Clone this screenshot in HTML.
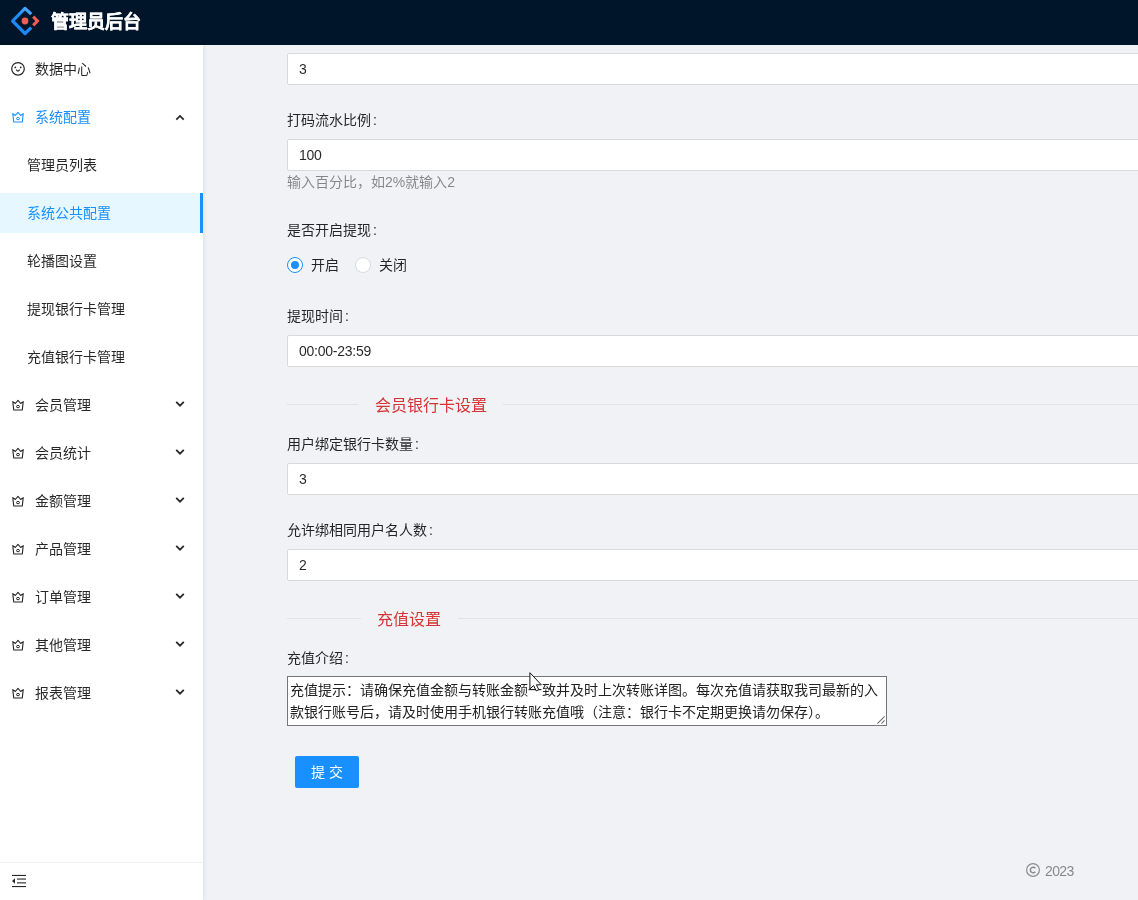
<!DOCTYPE html>
<html lang="zh-CN"><head><meta charset="utf-8">
<style>
*{box-sizing:border-box;margin:0;padding:0}
html,body{width:1138px;height:900px;overflow:hidden;background:#f0f2f5;font-family:"Liberation Sans",sans-serif;font-size:14px;color:rgba(0,0,0,.85)}
#hdr{position:absolute;left:0;top:0;width:1138px;height:45px;background:#001529}
#hdr .title{position:absolute;left:51px;top:10px;font-size:18px;line-height:24px;font-weight:bold;color:#fff;-webkit-text-stroke:0.35px #fff;letter-spacing:0}
#side{position:absolute;left:0;top:45px;width:203px;height:855px;background:#fff;box-shadow:1px 0 4px rgba(0,21,41,.08);z-index:2}
.mi{position:absolute;left:0;width:203px;height:40px;line-height:40px;white-space:nowrap}
.mi .t{position:absolute;left:35px;top:0}
.mi.sub .t{left:27px}
.mi.sel{background:#e6f7ff;color:#1890ff}
.mi.sel:after{content:"";position:absolute;right:0;top:0;width:3px;height:40px;background:#1890ff}
.mi.blue{color:#1890ff}
.ico{position:absolute;left:0;top:0}
#foot{position:absolute;left:0;top:817px;width:203px;height:38px;border-top:1px solid #f0f0f0}
#main{position:absolute;left:203px;top:45px;width:935px;height:855px;overflow:hidden}
.lab{position:absolute;left:84px;height:22px;line-height:22px;white-space:nowrap}
.inp{position:absolute;left:84px;width:1200px;height:32px;background:#fff;border:1px solid #d9d9d9;border-radius:2px;padding:0 11px;line-height:30px;color:rgba(0,0,0,.85);letter-spacing:-0.25px}
.help{position:absolute;left:84px;height:22px;line-height:22px;color:rgba(0,0,0,.45);white-space:nowrap}
.div{position:absolute;left:84px;width:1200px;height:26px}
.div .l1{position:absolute;left:0;top:13px;height:1px;background:rgba(0,0,0,.06)}
.div .l2{position:absolute;top:13px;height:1px;width:1000px;background:rgba(0,0,0,.06)}
.div .tx{position:absolute;top:1.5px;line-height:26px;font-size:16px;color:#d63434;white-space:nowrap}
.radio{position:absolute;width:16px;height:16px;border-radius:50%;border:1px solid #d9d9d9;background:#fff}
.radio.on{border-color:#1890ff}
.radio.on:after{content:"";position:absolute;left:3px;top:3px;width:8px;height:8px;border-radius:50%;background:#1890ff}
.ta{position:absolute;left:84px;top:631px;width:600px;height:50px;border:1px solid #767676;background:#fff;padding:2px 2px;line-height:22px;font-size:14px;color:#222;overflow:hidden;border-radius:0}
.btn{position:absolute;left:92px;top:711px;width:64px;height:32px;background:#1890ff;border-radius:2px;color:#fff;text-align:center;line-height:32px}
.copy{position:absolute;left:822px;top:814px;color:rgba(0,0,0,.45);line-height:22px;white-space:nowrap}
#hdr,#side,#main{will-change:transform}
</style></head><body>
<div id="hdr">
<svg width="45" height="45" style="position:absolute;left:0;top:0" viewBox="0 0 45 45">
<defs><linearGradient id="lg" x1="31" y1="12" x2="14" y2="30" gradientUnits="userSpaceOnUse"><stop offset="0" stop-color="#4aa8ff"/><stop offset="0.35" stop-color="#2290ff"/><stop offset="1" stop-color="#1a84f6"/></linearGradient></defs><path d="M31.2 14.2 L25 8.4 L12.6 21 L25 33.5 L31.2 27.6" fill="none" stroke="url(#lg)" stroke-width="3.2" stroke-linejoin="round" stroke-linecap="butt"/>
<path d="M33.2 16.6 L37.4 21 L33.2 25.4" fill="none" stroke="#f45c54" stroke-width="3.1" stroke-linejoin="miter"/>
<circle cx="25" cy="21" r="3.4" fill="#f45c54"/>
</svg>
<div class="title">管理员后台</div>
</div>
<div id="side">
<div class="mi " style="top:4px"><svg class="ico" width="203" height="40"><circle cx="18" cy="19.8" r="6.3" fill="none" stroke="#262626" stroke-width="1.25"/><circle cx="15.3" cy="18.4" r="0.85" fill="#262626"/><circle cx="20.7" cy="18.4" r="0.85" fill="#262626"/><path d="M16.3 20.6 Q17.95 23.6 19.6 20.6" fill="none" stroke="#262626" stroke-width="1.15"/></svg><span class="t">数据中心</span></div>
<div class="mi blue" style="top:52px"><svg class="ico" width="203" height="40"><path d="M12.8 16.6 L15.3 18.5 L18 15.4 L20.7 18.5 L23.2 16.6 L22.3 25 L13.7 25 Z" fill="none" stroke="#1890ff" stroke-width="1.1" stroke-linejoin="round"/><ellipse cx="18" cy="21.6" rx="1.5" ry="1.15" fill="none" stroke="#1890ff" stroke-width="1"/></svg><svg class="ico" width="203" height="40"><path d="M176.3 22.6 L180 18.9 L183.7 22.6" fill="none" stroke="#262626" stroke-width="1.7"/></svg><span class="t">系统配置</span></div>
<div class="mi sub" style="top:100px"><span class="t">管理员列表</span></div>
<div class="mi sub sel" style="top:148px"><span class="t">系统公共配置</span></div>
<div class="mi sub" style="top:196px"><span class="t">轮播图设置</span></div>
<div class="mi sub" style="top:244px"><span class="t">提现银行卡管理</span></div>
<div class="mi sub" style="top:292px"><span class="t">充值银行卡管理</span></div>
<div class="mi " style="top:340px"><svg class="ico" width="203" height="40"><path d="M12.8 16.6 L15.3 18.5 L18 15.4 L20.7 18.5 L23.2 16.6 L22.3 25 L13.7 25 Z" fill="none" stroke="#262626" stroke-width="1.1" stroke-linejoin="round"/><ellipse cx="18" cy="21.6" rx="1.5" ry="1.15" fill="none" stroke="#262626" stroke-width="1"/></svg><svg class="ico" width="203" height="40"><path d="M176.2 16.9 L180 20.7 L183.8 16.9" fill="none" stroke="#262626" stroke-width="1.7"/></svg><span class="t">会员管理</span></div>
<div class="mi " style="top:388px"><svg class="ico" width="203" height="40"><path d="M12.8 16.6 L15.3 18.5 L18 15.4 L20.7 18.5 L23.2 16.6 L22.3 25 L13.7 25 Z" fill="none" stroke="#262626" stroke-width="1.1" stroke-linejoin="round"/><ellipse cx="18" cy="21.6" rx="1.5" ry="1.15" fill="none" stroke="#262626" stroke-width="1"/></svg><svg class="ico" width="203" height="40"><path d="M176.2 16.9 L180 20.7 L183.8 16.9" fill="none" stroke="#262626" stroke-width="1.7"/></svg><span class="t">会员统计</span></div>
<div class="mi " style="top:436px"><svg class="ico" width="203" height="40"><path d="M12.8 16.6 L15.3 18.5 L18 15.4 L20.7 18.5 L23.2 16.6 L22.3 25 L13.7 25 Z" fill="none" stroke="#262626" stroke-width="1.1" stroke-linejoin="round"/><ellipse cx="18" cy="21.6" rx="1.5" ry="1.15" fill="none" stroke="#262626" stroke-width="1"/></svg><svg class="ico" width="203" height="40"><path d="M176.2 16.9 L180 20.7 L183.8 16.9" fill="none" stroke="#262626" stroke-width="1.7"/></svg><span class="t">金额管理</span></div>
<div class="mi " style="top:484px"><svg class="ico" width="203" height="40"><path d="M12.8 16.6 L15.3 18.5 L18 15.4 L20.7 18.5 L23.2 16.6 L22.3 25 L13.7 25 Z" fill="none" stroke="#262626" stroke-width="1.1" stroke-linejoin="round"/><ellipse cx="18" cy="21.6" rx="1.5" ry="1.15" fill="none" stroke="#262626" stroke-width="1"/></svg><svg class="ico" width="203" height="40"><path d="M176.2 16.9 L180 20.7 L183.8 16.9" fill="none" stroke="#262626" stroke-width="1.7"/></svg><span class="t">产品管理</span></div>
<div class="mi " style="top:532px"><svg class="ico" width="203" height="40"><path d="M12.8 16.6 L15.3 18.5 L18 15.4 L20.7 18.5 L23.2 16.6 L22.3 25 L13.7 25 Z" fill="none" stroke="#262626" stroke-width="1.1" stroke-linejoin="round"/><ellipse cx="18" cy="21.6" rx="1.5" ry="1.15" fill="none" stroke="#262626" stroke-width="1"/></svg><svg class="ico" width="203" height="40"><path d="M176.2 16.9 L180 20.7 L183.8 16.9" fill="none" stroke="#262626" stroke-width="1.7"/></svg><span class="t">订单管理</span></div>
<div class="mi " style="top:580px"><svg class="ico" width="203" height="40"><path d="M12.8 16.6 L15.3 18.5 L18 15.4 L20.7 18.5 L23.2 16.6 L22.3 25 L13.7 25 Z" fill="none" stroke="#262626" stroke-width="1.1" stroke-linejoin="round"/><ellipse cx="18" cy="21.6" rx="1.5" ry="1.15" fill="none" stroke="#262626" stroke-width="1"/></svg><svg class="ico" width="203" height="40"><path d="M176.2 16.9 L180 20.7 L183.8 16.9" fill="none" stroke="#262626" stroke-width="1.7"/></svg><span class="t">其他管理</span></div>
<div class="mi " style="top:628px"><svg class="ico" width="203" height="40"><path d="M12.8 16.6 L15.3 18.5 L18 15.4 L20.7 18.5 L23.2 16.6 L22.3 25 L13.7 25 Z" fill="none" stroke="#262626" stroke-width="1.1" stroke-linejoin="round"/><ellipse cx="18" cy="21.6" rx="1.5" ry="1.15" fill="none" stroke="#262626" stroke-width="1"/></svg><svg class="ico" width="203" height="40"><path d="M176.2 16.9 L180 20.7 L183.8 16.9" fill="none" stroke="#262626" stroke-width="1.7"/></svg><span class="t">报表管理</span></div>
<div id="foot"><svg width="40" height="38" style="position:absolute;left:0;top:0"><rect x="12" y="11.9" width="14" height="1.1" fill="#262626"/><rect x="17" y="15.5" width="9" height="1.1" fill="#262626"/><rect x="17" y="19.3" width="9" height="1.1" fill="#262626"/><rect x="12" y="23" width="14" height="1.1" fill="#262626"/><path d="M12 18 L15 15.3 L15 20.7 Z" fill="#262626"/></svg></div>
</div>
<div id="main">
<div class="inp" style="top:8px">3</div>
<div class="lab" style="top:64px">打码流水比例<span style="margin-left:2px">:</span></div>
<div class="inp" style="top:94px">100</div>
<div class="help" style="top:126px">输入百分比，如2%就输入2</div>
<div class="lab" style="top:174px">是否开启提现<span style="margin-left:2px">:</span></div>
<div class="radio on" style="left:84px;top:212px"></div><span class="lab" style="left:108px;top:209px">开启</span>
<div class="radio" style="left:152px;top:212px"></div><span class="lab" style="left:176px;top:209px">关闭</span>
<div class="lab" style="top:260px">提现时间<span style="margin-left:2px">:</span></div>
<div class="inp" style="top:290px">00:00-23:59</div>
<div class="div" style="top:346px"><div class="l1" style="width:71px"></div><div class="tx" style="left:88px">会员银行卡设置</div><div class="l2" style="left:216px"></div></div>
<div class="lab" style="top:388px">用户绑定银行卡数量<span style="margin-left:2px">:</span></div>
<div class="inp" style="top:418px">3</div>
<div class="lab" style="top:474px">允许绑相同用户名人数<span style="margin-left:2px">:</span></div>
<div class="inp" style="top:504px">2</div>
<div class="div" style="top:560px"><div class="l1" style="width:74px"></div><div class="tx" style="left:90px">充值设置</div><div class="l2" style="left:171px"></div></div>
<div class="lab" style="top:602px">充值介绍<span style="margin-left:2px">:</span></div>
<div class="ta">充值提示：请确保充值金额与转账金额一致并及时上次转账详图。每次充值请获取我司最新的入款银行账号后，请及时使用手机银行转账充值哦（注意：银行卡不定期更换请勿保存）。</div>
<div class="btn">提 交</div>
<svg style="position:absolute;left:822px;top:817px" width="16" height="16" viewBox="0 0 16 16"><circle cx="8" cy="8" r="6.4" fill="none" stroke="#8c8c8c" stroke-width="1.2"/><path d="M10.3 6.2 A2.8 2.8 0 1 0 10.3 9.8" fill="none" stroke="#8c8c8c" stroke-width="1.5"/></svg><div class="copy" style="left:842px;top:815px;letter-spacing:-0.6px">2023</div>
<svg style="position:absolute;left:0;top:0" width="935" height="855"><polygon points="326.9,627.7 326.9,644 330.6,640.6 333.2,645.9 335.8,644.7 333.4,639.8 338.3,639.8" fill="#fff" stroke="#111" stroke-width="1" stroke-linejoin="miter"/>
<path d="M674.4 678.6 L681.6 671.4 M678.4 678.6 L681.6 675.4" stroke="#707070" stroke-width="1.1"/></svg>
</div>
</body></html>
